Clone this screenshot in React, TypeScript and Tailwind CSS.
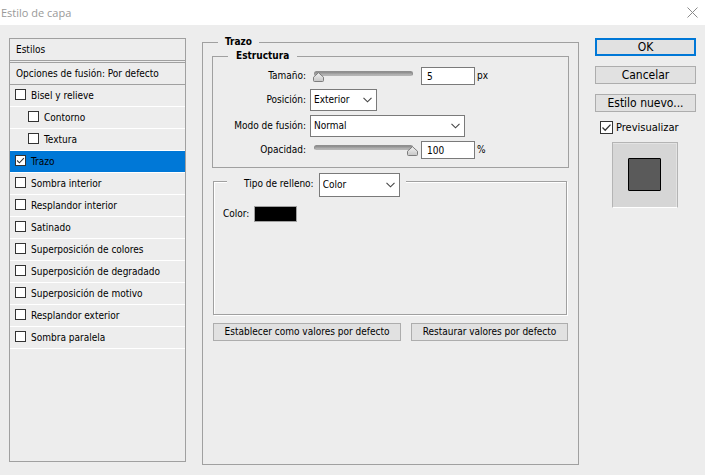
import { useState } from 'react'
import type { ReactNode } from 'react'
import clsx from 'clsx'

type StyleItem = { id: string; label: string; nested?: boolean }

const STYLE_ITEMS: StyleItem[] = [
  { id: 'bevel', label: 'Bisel y relieve' },
  { id: 'contour', label: 'Contorno', nested: true },
  { id: 'texture', label: 'Textura', nested: true },
  { id: 'stroke', label: 'Trazo' },
  { id: 'inner-shadow', label: 'Sombra interior' },
  { id: 'inner-glow', label: 'Resplandor interior' },
  { id: 'satin', label: 'Satinado' },
  { id: 'color-overlay', label: 'Superposición de colores' },
  { id: 'gradient-overlay', label: 'Superposición de degradado' },
  { id: 'pattern-overlay', label: 'Superposición de motivo' },
  { id: 'outer-glow', label: 'Resplandor exterior' },
  { id: 'drop-shadow', label: 'Sombra paralela' },
]

function Checkbox({ id, checked, onChange, large }: { id: string; checked: boolean; onChange: () => void; large?: boolean }) {
  return (
    <span className={clsx('relative block shrink-0', large ? 'size-[13px]' : 'size-[11px]')}>
      <input
        id={id}
        type="checkbox"
        checked={checked}
        onChange={onChange}
        className="block size-full appearance-none border border-[#333333] bg-white"
      />
      {checked ? (
        <svg viewBox="0 0 13 13" className="pointer-events-none absolute inset-0 size-full" fill="none" stroke="#333333" strokeWidth="1.3">
          <path d="M2.5 6.5 5.2 9.2 10.5 3.6" />
        </svg>
      ) : null}
    </span>
  )
}

function Select({ id, options, className }: { id: string; options: string[]; className: string }) {
  return (
    <span className={clsx('relative block', className)}>
      <select id={id} className="block size-full appearance-none border border-[#7a7a7a] bg-white pl-[3px] pr-5 text-black">
        {options.map((option) => (
          <option key={option}>{option}</option>
        ))}
      </select>
      <svg
        viewBox="0 0 9 6"
        className="pointer-events-none absolute right-[5px] top-1/2 h-[6px] w-[9px] -translate-y-1/2"
        fill="none"
        stroke="#444444"
        strokeWidth="1.1"
      >
        <path d="M0.5 0.8 4.5 4.8 8.5 0.8" />
      </svg>
    </span>
  )
}

type SliderFieldProps = { id: string; unit: string; value: number; max: number; onChange: (value: number) => void }

function SliderField({ id, unit, value, max, onChange }: SliderFieldProps) {
  const position = Math.min(1, value / max)

  return (
    <div className="flex h-[18px] items-center">
      <div className="relative ml-1 h-full w-[99px]">
        <div className="mt-1 h-[5px] rounded-full border border-[#8f8f8f] border-b-[#b5b5b5] bg-gradient-to-b from-[#8a8a8a] to-[#b8b8b8]" />
        <svg
          viewBox="0 0 11 10"
          className="absolute top-[5px] -ml-px h-[10px] w-[11px]"
          style={{ left: Math.floor(position * 94) }}
          stroke="#7d7d7d"
        >
          <defs>
            <linearGradient id={`${id}-thumb`} x1="0" y1="0" x2="0" y2="1">
              <stop offset="0" stopColor="#f4f4f4" />
              <stop offset="1" stopColor="#c6c6c6" />
            </linearGradient>
          </defs>
          <path
            fill={`url(#${id}-thumb)`}
            d="M5.5 0.7 10.5 5.2V8.5Q10.5 9.5 9.5 9.5H1.5Q0.5 9.5 0.5 8.5V5.2Z"
          />
        </svg>
        <input
          type="range"
          aria-labelledby={`${id}-label`}
          min={0}
          max={max}
          value={value}
          onChange={(e) => onChange(Number(e.target.value))}
          className="absolute inset-0 size-full opacity-0"
        />
      </div>
      <input
        id={id}
        type="text"
        value={value}
        onChange={(e) => onChange(Number(e.target.value) || 0)}
        className="ml-2 h-[18px] w-[54px] border border-[#7a7a7a] bg-white px-[5px]"
      />
      <span className="ml-0.5">{unit}</span>
    </div>
  )
}

function Button({ children, primary, large }: { children: ReactNode; primary?: boolean; large?: boolean }) {
  return (
    <button
      type="button"
      className={clsx(
        'flex h-[18px] w-full items-center justify-center whitespace-nowrap bg-[#e1e1e1]',
        primary ? 'border-2 border-[#0078d7]' : 'border border-[#adadad]',
        large && 'text-[12px]',
      )}
    >
      {children}
    </button>
  )
}

export default function App() {
  const [enabled, setEnabled] = useState<string[]>(['stroke'])
  const [preview, setPreview] = useState(true)
  const [size, setSize] = useState(5)
  const [opacity, setOpacity] = useState(100)
  const [color, setColor] = useState('#000000')

  const toggle = (id: string) =>
    setEnabled((ids) => (ids.includes(id) ? ids.filter((other) => other !== id) : [...ids, id]))

  return (
    <div className="flex min-h-screen flex-col bg-[#ededed] font-['DejaVu_Sans_Condensed','DejaVu_Sans',sans-serif] text-[10px] leading-[14px] text-black">
      <header className="flex h-[25px] items-center justify-between bg-white pl-px pr-[7px] font-['Open_Sans',sans-serif] text-[11px] text-[#999999]">
        <h1>Estilo de capa</h1>
        <button type="button" aria-label="Cerrar">
          <svg viewBox="0 0 11 11" className="size-[11px]" stroke="#8a8a8a" fill="none">
            <path d="M0.5 0.5 10.5 10.5M10.5 0.5 0.5 10.5" />
          </svg>
        </button>
      </header>

      <div className="flex flex-1 gap-4 px-[9px]">
        <aside className="my-[13px] w-[177px] shrink-0 border border-[#a0a0a0]">
          <h2 className="flex h-[22px] items-center border-b border-[#a0a0a0] pl-1.5">Estilos</h2>
          <h2 className="mt-px flex h-[23px] items-center border-y border-[#a0a0a0] pl-1.5">Opciones de fusión: Por defecto</h2>
          <ul>
            {STYLE_ITEMS.map((item) => (
              <li
                key={item.id}
                className={clsx(
                  'flex h-[22px] items-center gap-[5px] border-b border-white pb-0.5',
                  item.nested ? 'pl-[18px]' : 'pl-[5px]',
                  item.id === 'stroke' && 'bg-[#0078d7]',
                )}
              >
                <Checkbox id={item.id} checked={enabled.includes(item.id)} onChange={() => toggle(item.id)} />
                <label htmlFor={item.id} className="pt-0.5">
                  {item.label}
                </label>
              </li>
            ))}
          </ul>
        </aside>

        <fieldset className="my-[10px] min-w-0 flex-1 border border-[#a0a0a0] px-[9px]">
          <legend className="ml-1.5 px-[7px] font-bold">Trazo</legend>

          <fieldset className="border border-[#a0a0a0] pb-2 pt-1">
            <legend className="ml-[15px] px-2 font-bold">Estructura</legend>
            <div className="grid grid-cols-[93px_1fr] items-center gap-1">
              <label id="size-label" htmlFor="size" className="text-right">
                Tamaño:
              </label>
              <SliderField id="size" unit="px" value={size} max={500} onChange={setSize} />
              <label htmlFor="position" className="text-right">
                Posición:
              </label>
              <Select id="position" options={['Exterior', 'Interior', 'Centro']} className="h-[22px] w-[67px]" />
              <label htmlFor="blend" className="text-right">
                Modo de fusión:
              </label>
              <Select id="blend" options={['Normal', 'Disolver', 'Multiplicar']} className="h-[22px] w-[155px]" />
              <label id="opacity-label" htmlFor="opacity" className="text-right">
                Opacidad:
              </label>
              <SliderField id="opacity" unit="%" value={opacity} max={100} onChange={setOpacity} />
            </div>
          </fieldset>

          <fieldset className="ml-px mr-0.5 mt-[5px] h-[142px] border border-[#a0a0a0] pl-[9px] shadow-[1px_1px_0_#fff,inset_1px_1px_0_#fff]">
            <legend className="ml-1 flex h-4 items-start bg-[#ededed] pl-[17px] pr-1.5">
              <label htmlFor="fill" className="mr-[5px] mt-1">
                Tipo de relleno:
              </label>
              <Select id="fill" options={['Color', 'Degradado', 'Motivo']} className="h-6 w-[81px]" />
            </legend>
            <div className="mt-[17px] flex items-center gap-[5px]">
              <label htmlFor="color">Color:</label>
              <input
                id="color"
                type="color"
                value={color}
                onChange={(e) => setColor(e.target.value)}
                className="h-4 w-[43px] appearance-none border border-[#a0a0a0] p-0 [&::-webkit-color-swatch-wrapper]:p-0 [&::-webkit-color-swatch]:border-0"
              />
            </div>
          </fieldset>

          <div className="mx-px mt-2 grid grid-cols-[188fr_157fr] gap-[10px]">
            <Button>Establecer como valores por defecto</Button>
            <Button>Restaurar valores por defecto</Button>
          </div>
        </fieldset>

        <div className="mt-[13px] w-[101px] shrink-0">
          <div className="flex flex-col gap-[10px]">
            <Button primary large>
              OK
            </Button>
            <Button large>Cancelar</Button>
            <Button large>Estilo nuevo...</Button>
          </div>
          <div className="mt-[9px] flex h-[13px] items-center gap-[3px] pl-[5px] text-[11px]">
            <Checkbox id="preview" checked={preview} onChange={() => setPreview(!preview)} large />
            <label htmlFor="preview">Previsualizar</label>
          </div>
          <div className="ml-[17px] mt-2 flex size-[66px] items-center justify-center border border-b-white border-l-[#b4b4b4] border-r-[#b4b4b4] border-t-[#b4b4b4] bg-[#d6d6d6] pr-px pb-px shadow-[inset_-1px_1px_0_#e3e3e3]">
            {preview ? <div className="size-[33px] rounded-[1px] border border-black bg-[#5a5a5a]" /> : null}
          </div>
        </div>
      </div>
    </div>
  )
}
